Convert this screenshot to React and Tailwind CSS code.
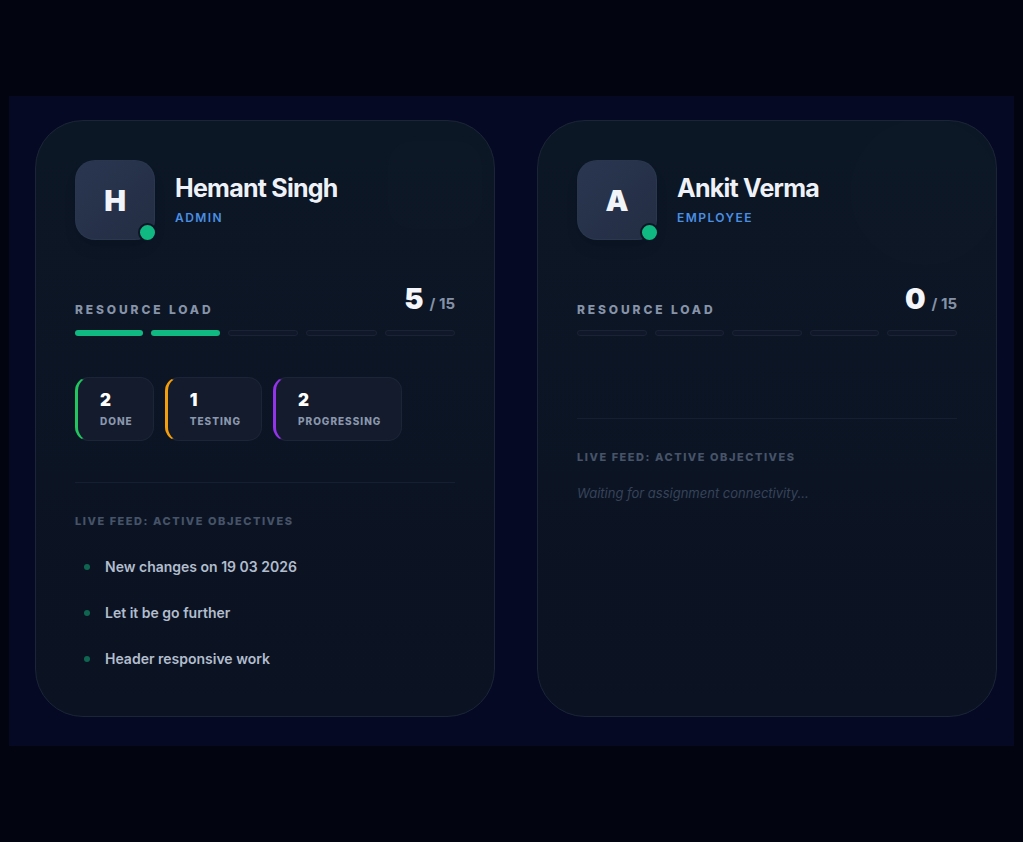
import React from "react";

const font = { fontFamily: "Inter, 'Noto Sans', sans-serif" };

function Bars({ filled }) {
  return (
    <div className="mt-[14px] flex gap-2">
      {[0, 1, 2, 3, 4].map((i) => (
        <div
          key={i}
          className={
            i < filled
              ? "h-[6px] flex-1 rounded-full bg-[#10b981]"
              : "h-[6px] flex-1 rounded-full border border-[#1a2335] bg-[#0f1728]"
          }
        />
      ))}
    </div>
  );
}

function Chip({ n, label, color }) {
  return (
    <div
      className={`flex h-16 flex-col justify-center gap-[7px] rounded-[14px] border border-[#1c2537] border-l-[3px] bg-[#131b2c] pl-[22px] pr-5 ${color}`}
    >
      <div className="text-[17px] font-black leading-none text-white">{n}</div>
      <div className="text-[10px] font-extrabold leading-none tracking-[0.1em] text-[#8a97ad]">
        {label}
      </div>
    </div>
  );
}

function Card({ letter, name, role, load, chips, items, watermark }) {
  return (
    <div className="relative h-[597px] w-[460px] shrink-0 overflow-hidden rounded-[48px] border border-[#1a2537] bg-gradient-to-b from-[#0c1726] to-[#0b1222] px-[39px] pt-[39px]">
      {watermark === "square" ? (
        <div className="absolute left-[352px] top-[20px] h-[88px] w-[94px] rounded-[24px] bg-white/[0.006]" />
      ) : (
        <div className="absolute left-[312px] top-[-2px] h-[146px] w-[150px] rounded-full bg-white/[0.006]" />
      )}
      <div className="relative flex items-center gap-5">
        <div className="relative h-20 w-20 shrink-0 rounded-[20px] border border-[#2d3a52]/60 bg-gradient-to-br from-[#2a3550] to-[#232e44] shadow-lg">
          <div className="flex h-full w-full items-center justify-center text-[29px] font-black leading-none text-[#f1f5f9]">
            {letter}
          </div>
          <div className="absolute bottom-[-3px] right-[-3px] h-[19px] w-[19px] rounded-full border-[2px] border-[#0c1525] bg-[#10b981]" />
        </div>
        <div className="flex flex-col pb-[3px]">
          <div className="text-[25px] font-bold leading-[28px] tracking-[-0.03em] text-[#eef2f8]">
            {name}
          </div>
          <div className="mt-[10px] text-[12px] font-semibold leading-none tracking-[0.12em] text-[#4a8fe3]">
            {role}
          </div>
        </div>
      </div>

      <div className="relative mt-[44px] flex items-end justify-between">
        <div className="text-[12px] font-extrabold leading-none tracking-[0.24em] text-[#8793a8]">
          RESOURCE LOAD
        </div>
        <div className="mb-[3px] flex items-baseline gap-[6px] leading-none">
          <span className="text-[29px] font-black leading-none text-[#f4f6fb]">{load}</span>
          <span className="text-[15px] font-bold leading-none text-[#8591a6]">/ 15</span>
        </div>
      </div>
      <Bars filled={load > 0 ? 2 : 0} />

      <div className="mt-[41px] flex gap-[11px]">
        {chips.map((c) => (
          <Chip key={c.label} {...c} />
        ))}
      </div>

      <div className="mt-[41px] h-px bg-[#151f31]" />

      <div className="mt-[33px] text-[11px] font-extrabold leading-none tracking-[0.14em] text-[#465368]">
        LIVE FEED: ACTIVE OBJECTIVES
      </div>

      {items.length > 0 ? (
        <div className="mt-[31px] flex flex-col gap-[29px] pl-[9px]">
          {items.map((t) => (
            <div key={t} className="flex items-center gap-[15px]">
              <div className="h-[6px] w-[6px] rounded-full bg-[#0f6650]" />
              <div className="text-[14px] font-semibold leading-[17px] text-[#b2bdcd]">{t}</div>
            </div>
          ))}
        </div>
      ) : (
        <div className="mt-[24px] text-[13px] italic leading-none text-[#364358]">
          Waiting for assignment connectivity...
        </div>
      )}
    </div>
  );
}

export default function App() {
  return (
    <div className="min-h-[842px] w-full bg-[#02040f] pt-[96px]" style={font}>
      <div className="ml-[9px] flex h-[650px] w-[1005px] gap-[42px] bg-[#050923] pl-[26px] pt-6">
        <Card
          letter="H"
          name="Hemant Singh"
          role="ADMIN"
          load={5}
          watermark="square"
          chips={[
            { n: 2, label: "DONE", color: "border-l-[#22c55e]" },
            { n: 1, label: "TESTING", color: "border-l-[#f59e0b]" },
            { n: 2, label: "PROGRESSING", color: "border-l-[#9333ea]" },
          ]}
          items={["New changes on 19 03 2026", "Let it be go further", "Header responsive work"]}
        />
        <Card
          letter="A"
          name="Ankit Verma"
          role="EMPLOYEE"
          load={0}
          watermark="circle"
          chips={[]}
          items={[]}
        />
      </div>
    </div>
  );
}
